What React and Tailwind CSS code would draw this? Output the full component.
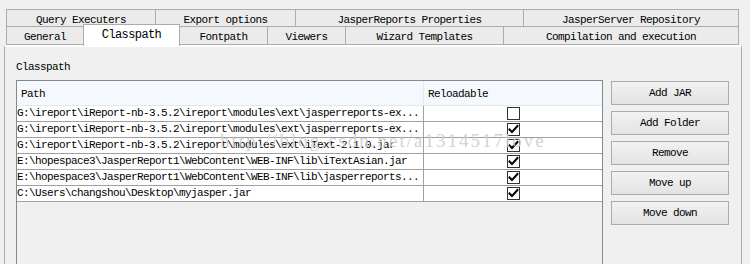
import React from "react";

const mono = { fontFamily: '"Liberation Mono", "DejaVu Sans Mono", monospace' };

const row1 = [
  ["Query Executers", 149],
  ["Export options", 140],
  ["JasperReports Properties", 228],
  ["JasperServer Repository", 216],
];
const row2 = [
  ["General", 77, false],
  ["Classpath", 97, true],
  ["Fontpath", 87, false],
  ["Viewers", 78, false],
  ["Wizard Templates", 158, false],
  ["Compilation and execution", 236, false],
];

const rows = [
  ["G:\\ireport\\iReport-nb-3.5.2\\ireport\\modules\\ext\\jasperreports-ex...", false],
  ["G:\\ireport\\iReport-nb-3.5.2\\ireport\\modules\\ext\\jasperreports-ex...", true],
  ["G:\\ireport\\iReport-nb-3.5.2\\ireport\\modules\\ext\\iText-2.1.0.jar", true],
  ["E:\\hopespace3\\JasperReport1\\WebContent\\WEB-INF\\lib\\iTextAsian.jar", true],
  ["E:\\hopespace3\\JasperReport1\\WebContent\\WEB-INF\\lib\\jasperreports...", true],
  ["C:\\Users\\changshou\\Desktop\\myjasper.jar", true],
];

function Check({ on }) {
  return (
    <div className="w-[13px] h-[13px] border border-[#333] bg-white flex items-center justify-center">
      {on && (
        <svg width="11" height="11" viewBox="0 0 11 11">
          <path d="M1.5 5.5 L4 8 L9.5 2" stroke="#000" strokeWidth="2" fill="none" strokeLinecap="square" />
        </svg>
      )}
    </div>
  );
}

function Btn({ children }) {
  return (
    <div className="w-[118px] h-[24px] border border-[#acacac] bg-gradient-to-b from-[#f2f2f2] to-[#e3e3e3] flex items-center justify-center pt-[1px] text-[11px] tracking-[-0.6px] text-black">
      {children}
    </div>
  );
}

export default function App() {
  return (
    <div className="relative w-[750px] h-[264px] overflow-hidden bg-[#f0f0f0] text-black" style={mono}>
      <div className="pt-[9px] pl-[6px]">
        <div className="flex h-[17px]">
          {row1.map(([t, w], i) => (
            <div
              key={t}
              style={{ width: w }}
              className={`border-t border-l border-[#acacac] bg-[#ebebeb] flex items-center justify-center pt-[4px] text-[11px] tracking-[-0.6px] leading-none ${i === row1.length - 1 ? "border-r" : ""}`}
            >
              {t}
            </div>
          ))}
        </div>
        <div className="flex h-[19px] items-end">
          {row2.map(([t, w, sel], i) =>
            sel ? (
              <div
                key={t}
                style={{ width: w }}
                className="relative z-10 h-[22px] -mb-[1px] bg-white border-t border-l border-r border-[#acacac] flex items-center justify-center text-[12px] tracking-[-0.6px] leading-none pb-[2px]"
              >
                {t}
              </div>
            ) : (
              <div
                key={t}
                style={{ width: w }}
                className={`h-[19px] border-t border-b border-[#acacac] ${i === 2 ? "" : "border-l"} ${i === row2.length - 1 ? "border-r" : ""} bg-[#ebebeb] flex items-center justify-center pt-[3px] text-[11px] tracking-[-0.6px] leading-none`}
              >
                {t}
              </div>
            )
          )}
        </div>
      </div>
      <div className="ml-[4px] w-[738px] h-[220px] border-l border-r border-[#acacac] border-t-2 border-t-white bg-[#f0f0f0] pl-[11px] pt-[14px]">
        <div className="text-[11px] tracking-[-0.6px] leading-[12px] h-[19px]">Classpath</div>
        <div className="flex gap-[8px]">
          <div className="w-[587px] h-[200px] border border-[#828790] bg-[#f0f0f0] flex flex-col">
            <div className="flex h-[25px] bg-[#f5f8fc] border-b border-[#e3e8ee]">
              <div className="w-[407px] border-r border-[#e3e8ee] pl-[4px] pt-[2px] flex items-center text-[11px] tracking-[-0.6px]">Path</div>
              <div className="flex-1 pl-[4px] pt-[2px] flex items-center text-[11px] tracking-[-0.6px]">Reloadable</div>
            </div>
            {rows.map(([p, on], i) => (
              <div key={i} className="flex h-[16px] bg-white border-b border-[#a0a0a0]">
                <div className="w-[407px] border-r border-[#a0a0a0] flex items-center text-[11px] tracking-[-0.6px] whitespace-nowrap overflow-hidden">{p}</div>
                <div className="flex-1 flex items-center justify-center">
                  <Check on={on} />
                </div>
              </div>
            ))}
          </div>
          <div className="flex flex-col gap-[6px] mt-[1px]">
            <Btn>Add JAR</Btn>
            <Btn>Add Folder</Btn>
            <Btn>Remove</Btn>
            <Btn>Move up</Btn>
            <Btn>Move down</Btn>
          </div>
        </div>
      </div>
      <div
        className="absolute left-[220px] top-[131px] text-[19px] tracking-[2px] leading-none text-[#cfcfcf] opacity-90 pointer-events-none whitespace-nowrap"
        style={{ fontFamily: '"Liberation Serif", serif' }}
      >
        http://blog.csdn.net/a1314517love
      </div>
    </div>
  );
}
